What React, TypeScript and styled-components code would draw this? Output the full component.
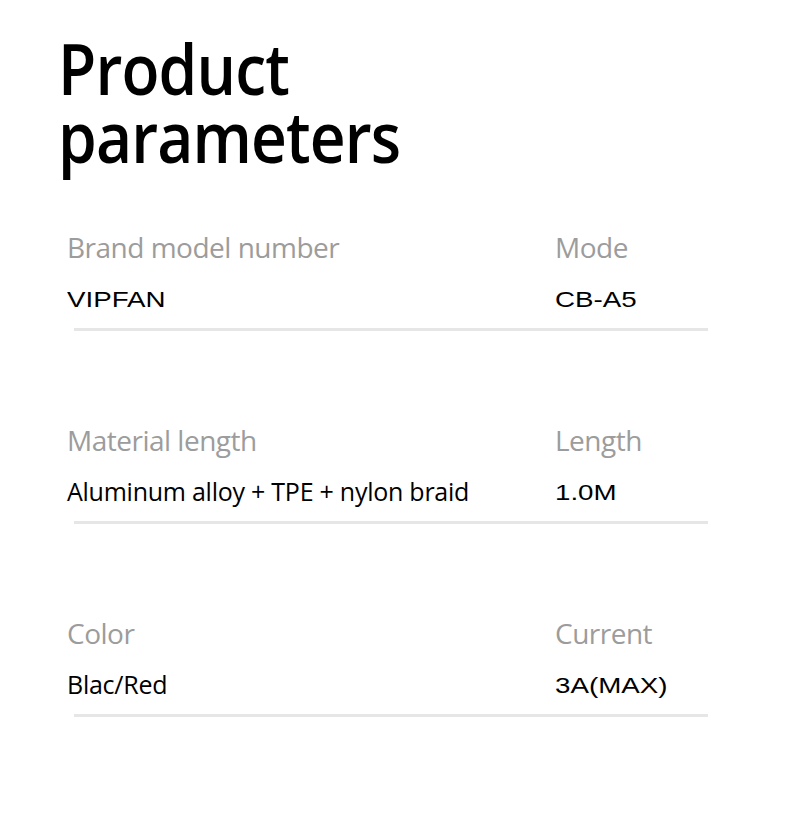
import styled, { createGlobalStyle } from 'styled-components';

interface IParam {
  label: string;
  value: string;
  latin?: boolean;
}

const rows: IParam[][] = [
  [
    { label: 'Brand model number', value: 'VIPFAN', latin: true },
    { label: 'Mode', value: 'CB-A5', latin: true },
  ],
  [
    { label: 'Material length', value: 'Aluminum alloy + TPE + nylon braid' },
    { label: 'Length', value: '1.0M', latin: true },
  ],
  [
    { label: 'Color', value: 'Blac/Red' },
    { label: 'Current', value: '3A(MAX)', latin: true },
  ],
];

const GlobalStyle = createGlobalStyle`
  body {
    margin: 0;
    background: #ffffff;
  }
`;

export default function App() {
  return (
    <>
      <GlobalStyle />
      <Page>
        <Title>
          <TitleLine>Product</TitleLine>
          <TitleLine>parameters</TitleLine>
        </Title>
        <List>
          {rows.map((row, i) => (
            <Row key={i}>
              <Cells>
                {row.map((cell) => (
                  <Cell key={cell.label}>
                    <Label>{cell.label}</Label>
                    <Value latin={cell.latin}>{cell.value}</Value>
                  </Cell>
                ))}
              </Cells>
              <Divider />
            </Row>
          ))}
        </List>
      </Page>
    </>
  );
}

const Page = styled.main`
  width: 790px;
  height: 827px;
  padding: 34px 0 0 58px;
  box-sizing: border-box;
  font-family: 'Open Sans', 'Noto Sans', sans-serif;
`;

// condensed a bit so Open Sans takes the width of the reference face
const Title = styled.h1`
  display: flex;
  flex-direction: column;
  align-items: flex-start;
  margin: 0;
  font-size: 70px;
  font-weight: 600;
  letter-spacing: -1px;
  color: #000000;
  transform: scaleX(0.89);
  transform-origin: left top;
`;

const TitleLine = styled.span`
  display: block;
  height: 68px;
  line-height: 68px;
`;

const List = styled.div`
  display: flex;
  flex-direction: column;
  gap: 92px;
  margin-top: 60px;
  padding-left: 9px;
`;

const Row = styled.section`
  display: flex;
  flex-direction: column;
`;

const Cells = styled.div`
  display: grid;
  grid-template-columns: 488px 1fr;
`;

const Cell = styled.div`
  display: flex;
  flex-direction: column;
  align-items: flex-start;
`;

const Label = styled.span`
  font-size: 28px;
  line-height: 34px;
  letter-spacing: -0.5px;
  color: #9c9c9c;
`;

// latin values are a stretched Arial face in the reference
const Value = styled.span<{ latin?: boolean }>`
  display: inline-block;
  margin-top: ${({ latin }) => (latin ? '21px' : '19px')};
  margin-bottom: ${({ latin }) => (latin ? '0' : '2px')};
  font-family: ${({ latin }) => (latin ? "'Liberation Sans', Arial, sans-serif" : "'Open Sans', 'Noto Sans', sans-serif")};
  font-size: ${({ latin }) => (latin ? '22px' : '25px')};
  line-height: 30px;
  letter-spacing: ${({ latin }) => (latin ? '0' : '-0.25px')};
  transform: ${({ latin }) => (latin ? 'scaleX(1.26)' : 'none')};
  transform-origin: left center;
  color: #000000;
`;

const Divider = styled.hr`
  width: 634px;
  height: 3px;
  margin: 13px 0 0 7px;
  border: 0;
  background: #e6e6e6;
`;
